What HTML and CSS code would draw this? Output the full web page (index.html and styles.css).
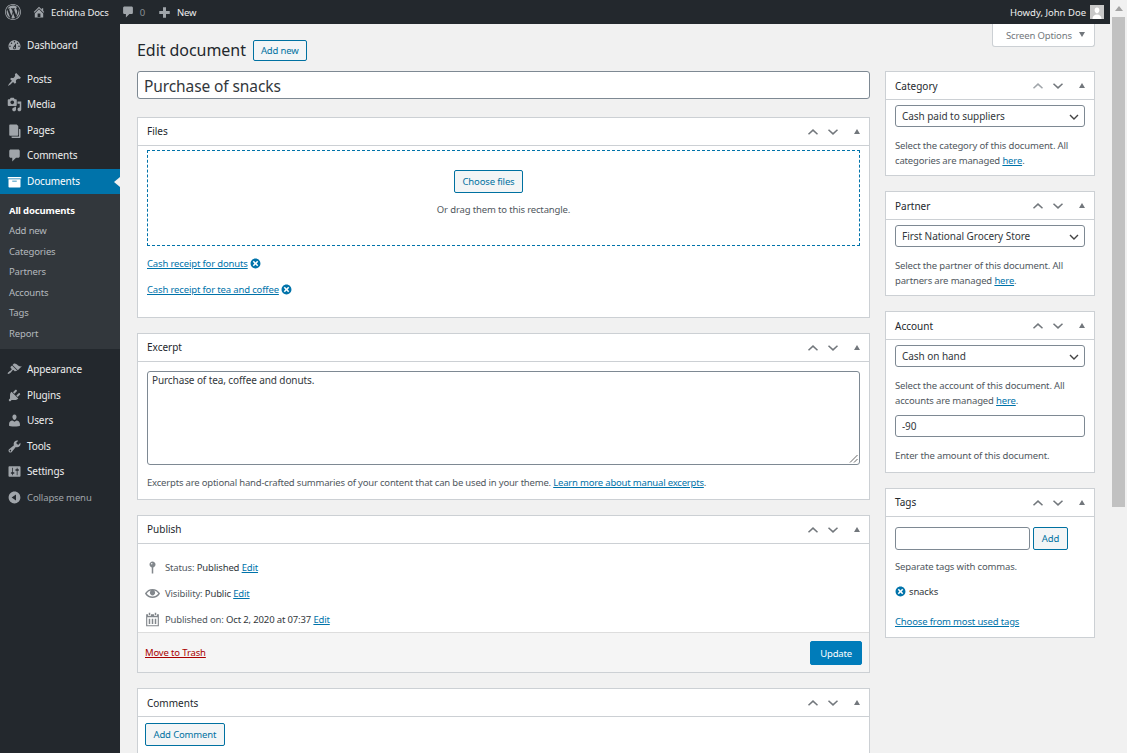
FILE: index.html
```html
<!DOCTYPE html>
<html lang="en">
<head>
<meta charset="utf-8">
<title>Edit document</title>
<link rel="stylesheet" href="styles.css">
</head>
<body>
<div class="frame">
  <div class="page">
    <header class="adminbar">
      <div class="ab-left">
        <svg class="ab-logo" viewBox="0 0 20 20"><path d="M20 10c0-5.52-4.48-10-10-10S0 4.48 0 10s4.48 10 10 10 10-4.48 10-10zM10 1.01c4.97 0 8.99 4.02 8.99 8.99s-4.02 8.99-8.99 8.99S1.01 14.97 1.01 10 5.03 1.01 10 1.01zM8.01 14.82L4.96 6.61c.49-.03 1.05-.08 1.05-.08.43-.05.38-1.01-.06-.99 0 0-1.29.1-2.13.1-.15 0-.33 0-.52-.01 1.44-2.17 3.9-3.6 6.7-3.6 2.09 0 3.99.79 5.41 2.09-.6-.08-1.45.35-1.45 1.42 0 .66.38 1.22.79 1.88.31.54.5 1.22.5 2.21 0 1.34-1.27 4.48-1.27 4.48l-2.71-7.5c.48-.03.75-.16.75-.16.43-.05.38-1.1-.05-1.08 0 0-1.3.11-2.14.11-.78 0-2.11-.11-2.11-.11-.43-.02-.48 1.06-.05 1.08l.84.08 1.12 3.04zm6.02 2.15L16.64 10s.67-1.69.39-3.81c.63 1.14.94 2.42.94 3.81 0 2.96-1.56 5.58-3.94 6.97zM2.68 6.77L6.5 17.25c-2.67-1.3-4.47-4.08-4.47-7.25 0-1.16.2-2.23.65-3.23zm7.45 4.53l2.29 6.25c-.75.27-1.57.42-2.42.42-.72 0-1.41-.11-2.06-.3z"/></svg>
        <span class="ab-item ab-site"><svg class="ab-icon" viewBox="0 0 20 20"><path d="M16 8.5l1.53 1.53-1.06 1.06L10 4.62l-6.47 6.47-1.06-1.06L10 2.5l4 4v-2h2v4zm-6-2.46l6 5.99V18H4v-5.97zM12 17v-5H8v5h4z"/></svg>Echidna Docs</span>
        <span class="ab-item ab-comments"><svg class="ab-icon" viewBox="0 0 20 20"><path d="M5 2h10c1.1 0 2 .9 2 2v7c0 1.1-.9 2-2 2h-3l-5 5v-5H5c-1.1 0-2-.9-2-2V4c0-1.1.9-2 2-2z"/></svg><span class="ab-count">0</span></span>
        <span class="ab-item ab-new"><svg class="ab-icon" viewBox="0 0 20 20"><path d="M17 8v4h-5v5H8v-5H3V8h5V3h4v5h5z"/></svg>New</span>
      </div>
      <div class="ab-right">Howdy, John Doe<span class="avatar"><svg viewBox="0 0 14 14"><rect width="14" height="14" fill="#c8c8c8"/><path d="M7 2.5c1.6 0 2.4 1.3 2.4 2.8S8.4 8.4 7 8.4 4.6 6.800 4.600 5.300 5.400 2.500 7 2.500zM2.500 14c0-3 2-4.600 4.500-4.600s4.500 1.600 4.500 4.600z" fill="#fff"/></svg></span></div>
    </header>
    <div class="workspace">
      <nav class="sidebar">
        <ul class="menu">
          <li class="menu-item"><svg class="menu-icon" viewBox="0 0 20 20"><path d="M3.760 16h12.480c1.100-1.370 1.760-3.110 1.760-5 0-4.420-3.580-8-8-8s-8 3.580-8 8c0 1.890.660 3.630 1.760 5zM10 4c.550 0 1 .450 1 1s-.450 1-1 1-1-.450-1-1 .450-1 1-1zM6 6c.550 0 1 .450 1 1s-.450 1-1 1-1-.450-1-1 .450-1 1-1zm8 0c.550 0 1 .450 1 1s-.450 1-1 1-1-.450-1-1 .450-1 1-1zm-5.370 5.550L12 7v6c0 1.100-.900 2-2 2s-2-.900-2-2c0-.570.240-1.080.630-1.450zM4 10c.550 0 1 .450 1 1s-.450 1-1 1-1-.450-1-1 .450-1 1-1zm12 0c.550 0 1 .450 1 1s-.450 1-1 1-1-.450-1-1 .450-1 1-1zm-5 3c0-.550-.450-1-1-1s-1 .450-1 1 .450 1 1 1 1-.450 1-1z" fill-rule="evenodd"/></svg>Dashboard</li>
          <li class="menu-sep"></li>
          <li class="menu-item"><svg class="menu-icon" viewBox="0 0 20 20"><path d="M10.440 3.020l1.820-1.820 6.360 6.350-1.830 1.820c-1.050-.680-2.480-.570-3.410.360l-.750.750c-.920.930-1.040 2.350-.350 3.410l-1.830 1.820-2.410-2.410-2.800 2.790c-.420.420-3.380 2.710-3.800 2.290s1.860-3.390 2.280-3.810l2.790-2.790L4.100 9.360l1.830-1.820c1.050.690 2.480.570 3.400-.360l.750-.750c.930-.920 1.050-2.350.360-3.410z"/></svg>Posts</li>
          <li class="menu-item"><svg class="menu-icon" viewBox="0 0 20 20"><path fill-rule="evenodd" d="M13 11V4c0-.550-.450-1-1-1h-1.670L9 1H5L3.670 3H2c-.550 0-1 .450-1 1v7c0 .550.450 1 1 1h10c.550 0 1-.450 1-1zM7 4.500c1.380 0 2.500 1.120 2.500 2.500S8.380 9.500 7 9.500 4.500 8.380 4.500 7 5.620 4.500 7 4.500zM14 6h5v10.500c0 1.380-1.120 2.500-2.500 2.500S14 17.880 14 16.500s1.120-2.500 2.500-2.500c.170 0 .340.020.500.050V9h-3V6zm-4 8.050V13h2v3.500c0 1.380-1.120 2.500-2.500 2.500S7 17.880 7 16.500 8.120 14 9.500 14c.170 0 .340.020.500.050z"/></svg>Media</li>
          <li class="menu-item"><svg class="menu-icon" viewBox="0 0 20 20"><path d="M16 8v10H6v1c0 .550.450 1 1 1h10c.550 0 1-.450 1-1V9c0-.550-.450-1-1-1h-1zM13 2H4c-.550 0-1 .450-1 1v13c0 .550.450 1 1 1h10c.550 0 1-.450 1-1V4z"/></svg>Pages</li>
          <li class="menu-item"><svg class="menu-icon" viewBox="0 0 20 20"><path d="M5 2h10c1.100 0 2 .900 2 2v7c0 1.100-.900 2-2 2h-3l-5 5v-5H5c-1.100 0-2-.900-2-2V4c0-1.100.900-2 2-2z"/></svg>Comments</li>
          <li class="menu-item is-active"><svg class="menu-icon" viewBox="0 0 20 20"><path fill-rule="evenodd" d="M19 4v2H1V4h18zM2 7h16v10c0 .550-.450 1-1 1H3c-.550 0-1-.450-1-1V7zm11 3V9H7v1h6z"/></svg>Documents</li>
          <li class="submenu">
            <a class="sub-item is-current">All documents</a>
            <a class="sub-item">Add new</a>
            <a class="sub-item">Categories</a>
            <a class="sub-item">Partners</a>
            <a class="sub-item">Accounts</a>
            <a class="sub-item">Tags</a>
            <a class="sub-item">Report</a>
          </li>
          <li class="menu-sep"></li>
          <li class="menu-item"><svg class="menu-icon" viewBox="0 0 20 20"><path d="M14.480 11.060L7.410 3.990l1.500-1.500c.500-.560 2.300-.470 3.510.320 1.210.800 1.430 1.280 2.910 2.100 1.180.640 2.450 1.260 4.450.850zm-.710.710L6.700 4.700 4.930 6.470c-.390.390-.390 1.020 0 1.410l1.060 1.060c.390.390.390 1.030 0 1.420-.600.600-1.430 1.110-2.210 1.690-.350.260-.700.530-1.010.840C1.430 13.230.400 15.100 1.100 15.800c.710.700 2.570-.330 3.900-1.670.310-.310.580-.660.840-1.010.580-.780 1.090-1.610 1.690-2.210.390-.390 1.030-.390 1.420 0l1.060 1.060c.390.390 1.020.390 1.410 0z"/></svg>Appearance</li>
          <li class="menu-item"><svg class="menu-icon" viewBox="0 0 20 20"><path d="M13.110 4.360L9.870 7.600 8 5.730l3.240-3.240c.350-.340 1.050-.200 1.560.320.520.510.660 1.210.310 1.550zm-8 1.770l.910-1.120 9.010 9.010-1.190.840c-.710.710-2.630 1.160-3.820 1.160H6.140L4.900 17.260c-.590.590-1.540.590-2.120 0-.590-.580-.590-1.530 0-2.120l1.240-1.240v-3.880c0-1.130.400-3.190 1.090-3.890zm7.260 3.970l3.240-3.240c.340-.350 1.040-.210 1.550.310.520.510.660 1.210.310 1.550l-3.240 3.250z"/></svg>Plugins</li>
          <li class="menu-item"><svg class="menu-icon" viewBox="0 0 20 20"><path d="M10 9.250c-2.270 0-2.730-3.440-2.730-3.440C7 4.020 7.820 2 9.970 2c2.160 0 2.980 2.020 2.710 3.810 0 0-.410 3.440-2.680 3.440zm0 2.570L12.720 10c2.390 0 4.520 2.330 4.520 4.530v2.490s-3.650 1.130-7.240 1.130c-3.650 0-7.240-1.130-7.240-1.130v-2.490c0-2.250 1.940-4.480 4.470-4.480z"/></svg>Users</li>
          <li class="menu-item"><svg class="menu-icon" viewBox="0 0 20 20"><path fill-rule="evenodd" d="M16.680 9.770c-1.340 1.340-3.300 1.670-4.950.990l-5.410 6.520c-.990.990-2.590.990-3.580 0s-.990-2.590 0-3.570l6.520-5.420c-.680-1.650-.350-3.610.990-4.950 1.280-1.280 3.120-1.620 4.720-1.060l-2.890 2.890 2.820 2.820 2.860-2.870c.530 1.580.180 3.390-1.080 4.650zM3.810 16.210c.400.390 1.040.390 1.430 0 .400-.400.400-1.040 0-1.430-.390-.400-1.030-.400-1.430 0-.390.390-.390 1.030 0 1.430z"/></svg>Tools</li>
          <li class="menu-item"><svg class="menu-icon" viewBox="0 0 20 20"><path fill-rule="evenodd" d="M18 16V4c0-.550-.450-1-1-1H3c-.550 0-1 .450-1 1v12c0 .550.450 1 1 1h14c.550 0 1-.450 1-1zM8 11h1c.550 0 1 .450 1 1s-.450 1-1 1H8v1.500c0 .280-.220.500-.500.500s-.500-.220-.500-.500V13H6c-.550 0-1-.450-1-1s.450-1 1-1h1V5.500c0-.280.220-.500.500-.500s.500.220.500.500V11zm5-2h-1c-.550 0-1-.450-1-1s.450-1 1-1h1V5.500c0-.280.220-.500.500-.500s.500.220.500.500V7h1c.550 0 1 .450 1 1s-.450 1-1 1h-1v5.500c0 .280-.220.500-.500.500s-.500-.220-.500-.500V9z"/></svg>Settings</li>
          <li class="menu-item menu-collapse"><svg class="menu-icon" viewBox="0 0 20 20"><path fill-rule="evenodd" d="M10 2.160c4.330 0 7.840 3.510 7.840 7.840s-3.510 7.840-7.840 7.840S2.160 14.330 2.160 10 5.710 2.160 10 2.160zm2 11.720V6.120L6.180 9.970z"/></svg>Collapse menu</li>
        </ul>
      </nav>
      <main class="content">
        <div class="screen-tab">Screen Options<span class="tab-arrow"></span></div>
        <div class="heading"><h1>Edit document</h1><a class="btn">Add new</a></div>
        <div class="columns">
          <div class="col-main">
            <div class="title-input">Purchase of snacks</div>

            <section class="box box-files">
              <div class="box-head"><h2>Files</h2><span class="ctrls"><svg class="ctl" viewBox="0 0 16 10"><path d="M2 8l6-5.500L14 8"/></svg><svg class="ctl" viewBox="0 0 16 10"><path d="M2 2l6 5.500L14 2"/></svg><span class="ctl-tri"></span></span></div>
              <div class="files-body">
                <div class="dropzone"><a class="btn">Choose files</a><p>Or drag them to this rectangle.</p></div>
                <p class="file-row"><a class="link">Cash receipt for donuts</a><svg class="x" viewBox="0 0 20 20"><path fill-rule="evenodd" d="M10 1c5 0 9 4 9 9s-4 9-9 9-9-4-9-9 4-9 9-9zm5 12l-3-3 3-3-2-2-3 3-3-3-2 2 3 3-3 3 2 2 3-3 3 3z"/></svg></p>
                <p class="file-row"><a class="link">Cash receipt for tea and coffee</a><svg class="x" viewBox="0 0 20 20"><path fill-rule="evenodd" d="M10 1c5 0 9 4 9 9s-4 9-9 9-9-4-9-9 4-9 9-9zm5 12l-3-3 3-3-2-2-3 3-3-3-2 2 3 3-3 3 2 2 3-3 3 3z"/></svg></p>
              </div>
            </section>

            <section class="box box-excerpt">
              <div class="box-head"><h2>Excerpt</h2><span class="ctrls"><svg class="ctl" viewBox="0 0 16 10"><path d="M2 8l6-5.500L14 8"/></svg><svg class="ctl" viewBox="0 0 16 10"><path d="M2 2l6 5.500L14 2"/></svg><span class="ctl-tri"></span></span></div>
              <div class="excerpt-body">
                <div class="textarea">Purchase of tea, coffee and donuts.<svg class="grip" viewBox="0 0 9 9"><path d="M8.500 1L1 8.500M8.500 5L5 8.500"/></svg></div>
                <p class="help">Excerpts are optional hand-crafted summaries of your content that can be used in your theme. <a class="link">Learn more about manual excerpts</a>.</p>
              </div>
            </section>

            <section class="box box-publish">
              <div class="box-head"><h2>Publish</h2><span class="ctrls"><svg class="ctl" viewBox="0 0 16 10"><path d="M2 8l6-5.500L14 8"/></svg><svg class="ctl" viewBox="0 0 16 10"><path d="M2 2l6 5.500L14 2"/></svg><span class="ctl-tri"></span></span></div>
              <div class="pub-rows">
                <div class="pub-row"><svg class="pub-icon" viewBox="0 0 20 20"><path fill-rule="evenodd" d="M14 6c0 1.860-1.280 3.410-3 3.860V18H9V9.860c-1.720-.450-3-2-3-3.860 0-2.210 1.790-4 4-4s4 1.790 4 4zM8 5c0 .550.450 1 1 1s1-.450 1-1-.450-1-1-1-1 .450-1 1z"/></svg>Status: <b>Published</b> <a class="link">Edit</a></div>
                <div class="pub-row"><svg class="pub-icon" viewBox="0 0 20 20"><path d="M19.700 9.400C17.700 6 14 3.900 10 3.900S2.300 6 .300 9.400L0 10l.300.600c2 3.400 5.700 5.500 9.700 5.500s7.700-2.100 9.700-5.500l.300-.600-.300-.600zM10 14.100c-3.100 0-6-1.600-7.700-4.100C3.600 8 5.700 6.600 8 6.100c-.900.600-1.500 1.700-1.500 2.900 0 1.900 1.600 3.500 3.500 3.500s3.500-1.600 3.500-3.500c0-1.200-.600-2.300-1.500-2.900 2.300.500 4.400 1.900 5.700 3.900-1.700 2.500-4.600 4.100-7.700 4.100z"/></svg>Visibility: <b>Public</b> <a class="link">Edit</a></div>
                <div class="pub-row"><svg class="pub-icon" viewBox="0 0 20 20"><path fill-rule="evenodd" d="M5 1h2v3H5zM13 1h2v3h-2zM1.500 3H4v2h4V3h4v2h4V3h2.500v16h-17zM3 7v10.500h14V7zM5 9h2v7H5zM9 9h2v7H9zM13 9h2v7h-2z"/></svg>Published on: <b>Oct 2, 2020 at 07:37</b> <a class="link">Edit</a></div>
              </div>
              <div class="pub-foot"><a class="trash">Move to Trash</a><a class="btn btn-primary">Update</a></div>
            </section>

            <section class="box box-comments">
              <div class="box-head"><h2>Comments</h2><span class="ctrls"><svg class="ctl" viewBox="0 0 16 10"><path d="M2 8l6-5.500L14 8"/></svg><svg class="ctl" viewBox="0 0 16 10"><path d="M2 2l6 5.500L14 2"/></svg><span class="ctl-tri"></span></span></div>
              <div class="comments-body"><a class="btn btn-soft">Add Comment</a></div>
            </section>
          </div>

          <aside class="col-side">
            <section class="box">
              <div class="box-head"><h2>Category</h2><span class="ctrls"><svg class="ctl ctl-dim" viewBox="0 0 16 10"><path d="M2 8l6-5.500L14 8"/></svg><svg class="ctl" viewBox="0 0 16 10"><path d="M2 2l6 5.500L14 2"/></svg><span class="ctl-tri"></span></span></div>
              <div class="side-body">
                <div class="select">Cash paid to suppliers<svg class="caret" viewBox="0 0 10 6"><path d="M1 1l4 4 4-4"/></svg></div>
                <p class="help">Select the category of this document. All categories are managed <a class="link">here</a>.</p>
              </div>
            </section>
            <section class="box">
              <div class="box-head"><h2>Partner</h2><span class="ctrls"><svg class="ctl" viewBox="0 0 16 10"><path d="M2 8l6-5.500L14 8"/></svg><svg class="ctl" viewBox="0 0 16 10"><path d="M2 2l6 5.500L14 2"/></svg><span class="ctl-tri"></span></span></div>
              <div class="side-body">
                <div class="select">First National Grocery Store<svg class="caret" viewBox="0 0 10 6"><path d="M1 1l4 4 4-4"/></svg></div>
                <p class="help">Select the partner of this document. All partners are managed <a class="link">here</a>.</p>
              </div>
            </section>
            <section class="box">
              <div class="box-head"><h2>Account</h2><span class="ctrls"><svg class="ctl" viewBox="0 0 16 10"><path d="M2 8l6-5.500L14 8"/></svg><svg class="ctl" viewBox="0 0 16 10"><path d="M2 2l6 5.500L14 2"/></svg><span class="ctl-tri"></span></span></div>
              <div class="side-body">
                <div class="select">Cash on hand<svg class="caret" viewBox="0 0 10 6"><path d="M1 1l4 4 4-4"/></svg></div>
                <p class="help">Select the account of this document. All accounts are managed <a class="link">here</a>.</p>
                <div class="input amount">-90</div>
                <p class="help help-tight">Enter the amount of this document.</p>
              </div>
            </section>
            <section class="box">
              <div class="box-head"><h2>Tags</h2><span class="ctrls"><svg class="ctl" viewBox="0 0 16 10"><path d="M2 8l6-5.500L14 8"/></svg><svg class="ctl" viewBox="0 0 16 10"><path d="M2 2l6 5.500L14 2"/></svg><span class="ctl-tri"></span></span></div>
              <div class="tags-body">
                <div class="tag-add"><div class="input tag-input"></div><a class="btn btn-soft btn-add">Add</a></div>
                <p class="help">Separate tags with commas.</p>
                <p class="tag"><svg class="x" viewBox="0 0 20 20"><path fill-rule="evenodd" d="M10 1c5 0 9 4 9 9s-4 9-9 9-9-4-9-9 4-9 9-9zm5 12l-3-3 3-3-2-2-3 3-3-3-2 2 3 3-3 3 2 2 3-3 3 3z"/></svg>snacks</p>
                <a class="link tags-more">Choose from most used tags</a>
              </div>
            </section>
          </aside>
        </div>
      </main>
    </div>
  </div>
  <div class="scrollbar"><span class="sb-arrow"></span><span class="sb-thumb"></span></div>
</div>
</body>
</html>
```

FILE: styles.css
```css
* { box-sizing: border-box; }
html, body { margin: 0; height: 100%; overflow: hidden; }
body { font: 9.5px/15px "Noto Sans", sans-serif; letter-spacing: -.15px; color: #444; background: #f1f1f1; }
h1, h2, p, ul { margin: 0; padding: 0; }
ul { list-style: none; }

.frame { display: flex; height: 753px; }
.page { flex: 1; min-width: 0; display: flex; flex-direction: column; }
.scrollbar { width: 17px; background: #f1f1f1; display: flex; flex-direction: column; align-items: center; }
.sb-arrow { margin-top: 6px; border: 4px solid transparent; border-top: 0; border-bottom: 5px solid #a3a3a3; height: 5px; width: 8px; margin-bottom: 6px; }
.sb-thumb { width: 13px; height: 490px; background: #c1c1c1; }

.adminbar { height: 24px; flex: none; background: #23282d; color: #eee; display: flex; justify-content: space-between; align-items: center; padding: 0 6px 0 5px; }
.ab-left { display: flex; align-items: center; }
.ab-logo { width: 16px; height: 16px; fill: #a0a5aa; margin-right: 11px; }
.ab-item { display: flex; align-items: center; }
.ab-icon { width: 14px; height: 14px; fill: #a0a5aa; margin-right: 5px; }
.ab-site { margin-right: 12px; }
.ab-comments { margin-right: 12px; }
.ab-count { color: #8a8f94; }
.ab-new .ab-icon { width: 15px; height: 15px; margin-right: 5px; }
.ab-right { display: flex; align-items: center; gap: 4px; letter-spacing: 0; }
.avatar { width: 14px; height: 14px; display: block; }
.avatar svg { display: block; width: 14px; height: 14px; }

.workspace { flex: 1; display: flex; min-height: 0; }
.sidebar { width: 120px; flex: none; background: #23282d; color: #eee; padding-top: 8.5px; }
.menu-item { height: 25.5px; display: flex; align-items: center; position: relative; font-size: 10px; letter-spacing: -.12px; }
.menu-icon { width: 15px; height: 15px; fill: #a0a5aa; margin: 0 5px 0 7px; flex: none; }
.menu-sep { height: 8.5px; }
.is-active { background: #0073aa; color: #fff; }
.is-active .menu-icon { fill: #fff; }
.is-active::after { content: ""; position: absolute; right: 0; top: 8px; border: 5px solid transparent; border-left: 0; border-right: 6px solid #f1f1f1; }
.submenu { background: #32373c; padding: 6.5px 0 4.5px; }
.sub-item { display: block; height: 20.5px; line-height: 20.5px; padding-left: 9px; color: #b4b9be; }
.is-current { color: #fff; font-weight: 700; }
.menu-collapse { color: #a0a5aa; font-size: 9.5px; }

.content { flex: 1; min-width: 0; padding: 0 15px 0 17px; position: relative; overflow: hidden; }
.screen-tab { position: absolute; top: 0; right: 15px; width: 103px; height: 23px; background: #fff; border: 1px solid #ccd0d4; border-top: 0; border-radius: 0 0 3px 3px; line-height: 23px; color: #72777c; padding-left: 13px; }
.tab-arrow { display: inline-block; margin-left: 7px; vertical-align: 2px; border: 3.5px solid transparent; border-bottom: 0; border-top: 5px solid #72777c; }
.heading { display: flex; align-items: center; height: 47px; padding-top: 5px; }
.heading h1 { font-size: 16px; font-weight: 400; letter-spacing: -.05px; color: #23282d; margin-right: 7px; line-height: 24px; }

.btn { display: inline-block; height: 21px; line-height: 19px; padding: 0 7px; color: #0071a1; border: 1px solid #0071a1; border-radius: 2px; background: #f3f5f6; }
.btn-primary { background: #007cba; border-color: #007cba; color: #fff; height: 24px; line-height: 23px; padding: 0 9px; }

.columns { display: flex; gap: 15px; }
.col-main { width: 733px; flex: none; }
.col-side { width: 210px; flex: none; }

.title-input { height: 28px; background: #fff; border: 1px solid #7e8993; border-radius: 3px; font-size: 15.5px; letter-spacing: -.1px; line-height: 28px; padding-left: 6px; color: #32373c; margin-bottom: 18px; }

.box { background: #fff; border: 1px solid #ccd0d4; margin-bottom: 15px; }
.box-head { height: 28px; display: flex; align-items: center; justify-content: space-between; border-bottom: 1px solid #ccd0d4; padding: 0 9px; }
.box-head h2 { font-size: 10px; font-weight: 400; letter-spacing: 0; color: #23282d; }
.col-side .box:not(:last-child) .box-head h2, .box-comments .box-head h2 { padding-top: 1px; }
.ctrls { display: flex; align-items: center; gap: 8px; }
.ctl { width: 12px; height: 8px; fill: none; stroke: #72777c; stroke-width: 2; }
.ctl-dim { stroke: #a0a5aa; }
.ctl-tri { margin-left: 7px; border: 3.5px solid transparent; border-top: 0; border-bottom: 5px solid #72777c; }

.link { color: #0073aa; text-decoration: underline; }
.help { color: #50575e; }

.files-body { padding: 4px 9px 0; height: 171px; }
.dropzone { height: 96px; border: 1px dashed #0073aa; display: flex; flex-direction: column; align-items: center; padding-top: 19px; color: #50575e; }
.dropzone .btn { height: 23px; line-height: 21px; padding: 0 7.5px; margin: 0 30px 9px 0; }
.file-row { display: flex; align-items: center; height: 15px; margin-top: 11px; }
.dropzone + .file-row { margin-top: 10px; }
.x { width: 11px; height: 11px; fill: #0073aa; margin-left: 2px; flex: none; }

.excerpt-body { padding: 9px 9px 0; height: 137px; }
.textarea { height: 94px; border: 1px solid #7e8993; border-radius: 3px; padding: 1px 4px 0; font-size: 10px; letter-spacing: -.1px; color: #32373c; position: relative; }
.grip { position: absolute; right: 1px; bottom: 1px; width: 9px; height: 9px; fill: none; stroke: #666; stroke-width: 1; }
.excerpt-body .help { margin-top: 10px; letter-spacing: -.19px; }

.pub-rows { padding: 11px 9px 0; height: 88px; color: #50575e; }
.pub-row { height: 26px; line-height: 26px; padding-left: 18px; position: relative; }
.pub-row b { font-weight: 400; color: #32373c; }
.pub-icon { position: absolute; left: -2px; top: 5px; width: 15px; height: 15px; fill: #82878c; }
.pub-foot { height: 40px; background: #f5f5f5; border-top: 1px solid #ddd; display: flex; align-items: center; justify-content: space-between; padding: 0 7px; }
.trash { color: #a00; text-decoration: underline; }
.comments-body { padding: 6px 7px 20px; }
.btn-soft { height: 23px; line-height: 22px; padding: 0 7.5px; }

.side-body { padding: 5px 9px 7px; }
.select { height: 22px; border: 1px solid #7e8993; border-radius: 3px; background: #fff; font-size: 10px; letter-spacing: -.05px; line-height: 20px; padding-left: 6px; color: #32373c; position: relative; }
.caret { position: absolute; right: 5px; top: 8px; width: 10px; height: 6px; fill: none; stroke: #444; stroke-width: 1.4; }
.side-body .help { margin-top: 11px; }
.input { height: 22px; background: #fff; border: 1px solid #7e8993; border-radius: 3px; font-size: 10px; line-height: 20px; padding-left: 6px; color: #32373c; }
.side-body .amount { margin-top: 7px; }
.side-body .help-tight { margin-top: 11px; margin-bottom: 2px; }

.tags-body { padding: 10px 9px 8px; }
.tag-add { display: flex; gap: 3px; }
.tag-input { width: 135px; height: 23px; }
.btn-add { width: 35px; padding: 0; text-align: center; }
.tags-body .help { margin-top: 9px; }
.tag { display: flex; align-items: center; margin-top: 10px; color: #32373c; }
.tag .x { margin: 0 3px 0 0; }
.tags-more { display: block; margin-top: 15px; }
```
